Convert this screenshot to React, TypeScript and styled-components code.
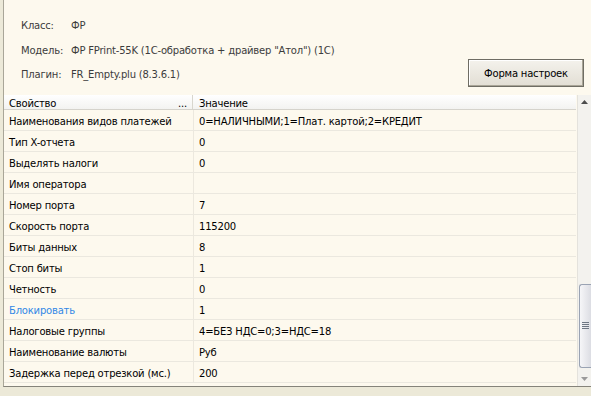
import React from 'react';
import styled, { createGlobalStyle } from 'styled-components';

const GlobalStyle = createGlobalStyle`
  html, body {
    margin: 0;
    padding: 0;
    background: #ece9d8;
  }
  body {
    font-family: Tahoma, "DejaVu Sans", sans-serif;
    font-size: 10px;
    letter-spacing: -0.2px;
    color: #000;
  }
`;

const Window = styled.div`
  width: 591px;
  height: 396px;
  overflow: hidden;
  display: flex;
  flex-direction: column;
  padding-left: 3px;
  box-sizing: border-box;
`;

const Panel = styled.div`
  height: 386px;
  background: #fdf9ee;
  border-left: 1px solid #a9a698;
  border-bottom: 1px solid #85837a;
  display: flex;
  flex-direction: column;
`;

const Info = styled.div`
  height: 95px;
  display: flex;
  align-items: flex-end;
  justify-content: space-between;
`;

const InfoList = styled.div`
  display: grid;
  grid-template-columns: 50px 1fr;
  grid-auto-rows: 24.5px;
  padding: 13px 0 8px 17px;
  align-items: center;
  color: #3c3c3c;
  white-space: nowrap;
`;

const Label = styled.span``;

const Value = styled.span``;

const SetupButton = styled.button`
  width: 116px;
  height: 28px;
  margin: 0 7px 8px 0;
  font: inherit;
  letter-spacing: inherit;
  color: #000;
  background: linear-gradient(#f4f2ec, #e2ded4);
  border: 1px solid #6f6d64;
  box-shadow: inset -1px -1px 0 #a9a597, inset 1px 1px 0 #fff;
  padding: 0;
`;

const GridArea = styled.div`
  flex: 1;
  display: flex;
  min-height: 0;
`;

const Table = styled.div`
  flex: 1;
  display: flex;
  flex-direction: column;
`;

const HeaderRow = styled.div`
  height: 14px;
  display: grid;
  grid-template-columns: 189px 1fr;
  background: linear-gradient(#ffffff, #f3f3f1);
  border-bottom: 1px solid #d5d3cc;
  line-height: 17px;
`;

const HeadCell = styled.div<{ $dots?: boolean }>`
  position: relative;
  padding-left: ${({ $dots }) => ($dots ? 5 : 6)}px;
  border-right: ${({ $dots }) => ($dots ? '1px solid #d8d6ce' : 'none')};
  white-space: nowrap;
  overflow: hidden;
`;

const Dots = styled.span`
  position: absolute;
  right: 5px;
  top: 0;
`;

const Row = styled.div`
  height: 20px;
  display: grid;
  grid-template-columns: 189px 1fr;
  border-bottom: 1px solid #ebe8df;
  line-height: 23px;
`;

const Cell = styled.div<{ $link?: boolean }>`
  padding-left: 5px;
  white-space: nowrap;
  overflow: hidden;
  color: ${({ $link }) => ($link ? '#3288e6' : '#000')};
  & + & {
    padding-left: 5px;
    border-left: 1px solid #ece8de;
  }
`;

const Scrollbar = styled.div`
  width: 13px;
  margin-left: 1px;
  background: #f3f2ee;
  border-left: 1px solid #e4e2dc;
  display: flex;
  flex-direction: column;
  align-items: center;
`;

const Arrow = styled.div`
  height: 14px;
  display: flex;
  align-items: center;
  justify-content: center;
`;

const Track = styled.div`
  flex: 1;
  width: 100%;
  display: flex;
  flex-direction: column;
  justify-content: flex-end;
`;

const Thumb = styled.div`
  height: 82px;
  margin: 0 0 4px 1px;
  border: 1px solid #9aa3b3;
  border-right: none;
  border-radius: 3px 0 0 3px;
  background: linear-gradient(90deg, #f6f6f8, #dcdde3);
  display: flex;
  align-items: center;
  justify-content: center;
`;

const rows: [string, string, boolean?][] = [
  ['Наименования видов платежей', '0=НАЛИЧНЫМИ;1=Плат. картой;2=КРЕДИТ'],
  ['Тип X-отчета', '0'],
  ['Выделять налоги', '0'],
  ['Имя оператора', ''],
  ['Номер порта', '7'],
  ['Скорость порта', '115200'],
  ['Биты данных', '8'],
  ['Стоп биты', '1'],
  ['Четность', '0'],
  ['Блокировать', '1', true],
  ['Налоговые группы', '4=БЕЗ НДС=0;3=НДС=18'],
  ['Наименование валюты', 'Руб'],
  ['Задержка перед отрезкой (мс.)', '200'],
];

export default function App() {
  return (
    <>
      <GlobalStyle />
      <Window>
        <Panel>
          <Info>
            <InfoList>
              <Label>Класс:</Label>
              <Value>ФР</Value>
              <Label>Модель:</Label>
              <Value>ФР FPrint-55K (1С-обработка + драйвер "Атол") (1С)</Value>
              <Label>Плагин:</Label>
              <Value>FR_Empty.plu (8.3.6.1)</Value>
            </InfoList>
            <SetupButton>Форма настроек</SetupButton>
          </Info>
          <GridArea>
            <Table>
              <HeaderRow>
                <HeadCell $dots>
                  Свойство<Dots>...</Dots>
                </HeadCell>
                <HeadCell>Значение</HeadCell>
              </HeaderRow>
              {rows.map(([name, value, link]) => (
                <Row key={name}>
                  <Cell $link={link}>{name}</Cell>
                  <Cell>{value}</Cell>
                </Row>
              ))}
            </Table>
            <Scrollbar>
              <Arrow>
                <svg width="7" height="4" viewBox="0 0 7 4">
                  <path d="M0 4 L3.5 0 L7 4 Z" fill="#4d4d4d" />
                </svg>
              </Arrow>
              <Track>
                <Thumb>
                  <svg width="7" height="8" viewBox="0 0 7 8">
                    <path d="M0 0.5 H7 M0 2.5 H7 M0 4.5 H7 M0 6.5 H7" stroke="#6e7683" strokeWidth="1" />
                  </svg>
                </Thumb>
              </Track>
              <Arrow>
                <svg width="7" height="4" viewBox="0 0 7 4">
                  <path d="M0 0 L3.5 4 L7 0 Z" fill="#9a9a9a" />
                </svg>
              </Arrow>
            </Scrollbar>
          </GridArea>
        </Panel>
      </Window>
    </>
  );
}
